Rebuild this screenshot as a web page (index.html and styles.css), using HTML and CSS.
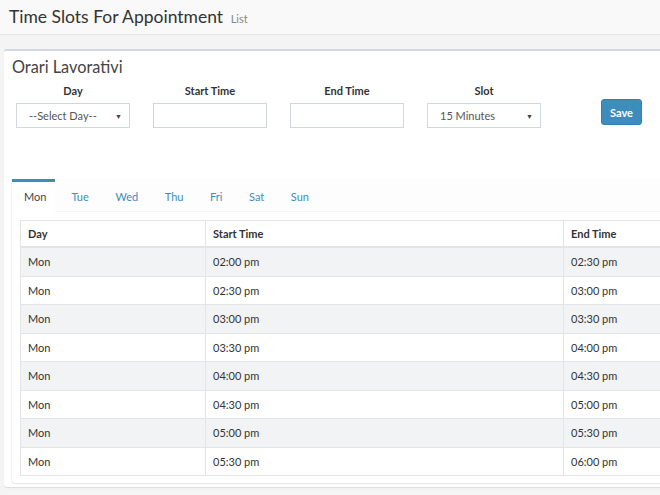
FILE: index.html
```html
<!DOCTYPE html>
<html>
<head>
<meta charset="utf-8">
<link rel="stylesheet" href="styles.css">
</head>
<body>
<div class="page">
  <header class="content-header">
    <h1>Time Slots For Appointment <small>List</small></h1>
  </header>
  <section class="content">
    <div class="box">
      <h3 class="box-title">Orari Lavorativi</h3>
      <div class="form-row">
        <div class="field">
          <label>Day</label>
          <div class="control select"><span>--Select Day--</span><i class="caret">&#9660;</i></div>
        </div>
        <div class="field">
          <label>Start Time</label>
          <div class="control"></div>
        </div>
        <div class="field">
          <label>End Time</label>
          <div class="control"></div>
        </div>
        <div class="field">
          <label>Slot</label>
          <div class="control select"><span>15 Minutes</span><i class="caret">&#9660;</i></div>
        </div>
        <button class="btn">Save</button>
      </div>
      <div class="tabs">
        <ul class="nav">
          <li class="active">Mon</li>
          <li>Tue</li>
          <li>Wed</li>
          <li>Thu</li>
          <li>Fri</li>
          <li>Sat</li>
          <li>Sun</li>
        </ul>
        <div class="tab-content">
          <table class="table">
            <colgroup>
              <col class="c1"><col class="c2"><col class="c3">
            </colgroup>
            <thead>
              <tr><th>Day</th><th>Start Time</th><th>End Time</th></tr>
            </thead>
            <tbody>
              <tr><td>Mon</td><td>02:00 pm</td><td>02:30 pm</td></tr>
              <tr><td>Mon</td><td>02:30 pm</td><td>03:00 pm</td></tr>
              <tr><td>Mon</td><td>03:00 pm</td><td>03:30 pm</td></tr>
              <tr><td>Mon</td><td>03:30 pm</td><td>04:00 pm</td></tr>
              <tr><td>Mon</td><td>04:00 pm</td><td>04:30 pm</td></tr>
              <tr><td>Mon</td><td>04:30 pm</td><td>05:00 pm</td></tr>
              <tr><td>Mon</td><td>05:00 pm</td><td>05:30 pm</td></tr>
              <tr><td>Mon</td><td>05:30 pm</td><td>06:00 pm</td></tr>
            </tbody>
          </table>
        </div>
      </div>
    </div>
  </section>
</div>
</body>
</html>
```
FILE: styles.css
```css
html, body {
  margin: 0;
  padding: 0;
  overflow: hidden;
}
body {
  background: #f4f4f4;
  font-family: Lato, "Liberation Sans", sans-serif;
  color: #333;
  width: 660px;
  height: 495px;
}
.page {
  width: 900px;
}
.content-header {
  background: #f9f9f9;
  border-bottom: 1px solid #e3e3e3;
  height: 35px;
  padding: 0 9px;
  box-sizing: border-box;
}
.content-header h1 {
  margin: 0;
  padding-top: 5px;
  font-size: 17.5px;
  font-weight: 400;
  color: #333;
  line-height: 24px;
}
.content-header small {
  font-size: 11px;
  color: #888;
  margin-left: 3px;
}
.content {
  padding: 14px 0 0 4px;
}
.box {
  background: #fff;
  border-top: 2px solid #d2d6de;
  border-radius: 3px;
  box-shadow: 0 1px 1px rgba(0,0,0,0.1);
  padding: 6px 0 4px 8px;
  width: 860px;
}
.box-title {
  margin: 0;
  font-size: 16.3px;
  font-weight: 400;
  line-height: 20px;
  color: #444;
}
.form-row {
  display: flex;
  align-items: flex-start;
  padding-left: 4px;
  gap: 23px;
  margin-top: 7px;
}
.field {
  width: 114px;
  display: flex;
  flex-direction: column;
}
.field label {
  text-align: center;
  font-size: 11px;
  font-weight: 700;
  line-height: 14px;
  margin-bottom: 5px;
}
.control {
  height: 25px;
  border: 1px solid #d2d6de;
  box-sizing: border-box;
  background: #fff;
}
.select {
  display: flex;
  align-items: center;
  justify-content: space-between;
  padding: 0 7px 0 12px;
  font-size: 11px;
  color: #555;
}
.caret {
  font-style: normal;
  font-size: 7px;
  color: #444;
}
.btn {
  margin-left: 37px;
  margin-top: 15px;
  width: 41px;
  height: 26px;
  background: #3c8dbc;
  border: 1px solid #367fa9;
  border-radius: 3px;
  color: #fff;
  font-family: inherit;
  font-size: 11px;
  font-weight: 700;
  padding: 0;
}
.tabs {
  margin-top: 51px;
  background: #fff;
  box-shadow: 0 1px 1px rgba(0,0,0,0.1), -1px 0 1px rgba(0,0,0,0.05);
  border-radius: 3px;
  padding-bottom: 7px;
}
.nav {
  list-style: none;
  margin: 0;
  padding: 0;
  display: flex;
  border-bottom: 1px solid #f4f4f4;
  height: 32px;
  background: #fdfdfd;
}
.nav li {
  font-size: 11px;
  color: #3c8dbc;
  padding: 0 12.8px;
  line-height: 30px;
  margin-right: 1px;
  border-top: 3px solid transparent;
  height: 30px;
}
.nav li:nth-child(2) { padding-left: 15.5px; }
.nav li.active {
  color: #444;
  background: #fff;
  border-top-color: #3c8dbc;
  padding: 0 12px;
  width: 19px;
}
.tab-content {
  padding: 8px 0 0 8px;
}
.table {
  border-collapse: collapse;
  font-size: 11px;
  table-layout: fixed;
  width: 780px;
}
.c1 { width: 185px; }
.c2 { width: 358px; }
.c3 { width: 237px; }
.table th, .table td {
  text-align: left;
  border: 1px solid #e4e4e4;
  padding: 0 7px;
  height: 27.5px;
}
.table th {
  font-weight: 700;
  border-bottom: 2px solid #e4e4e4;
  height: 25px;
}
.table tbody tr:nth-child(odd) td {
  background: #f2f3f5;
}
```
